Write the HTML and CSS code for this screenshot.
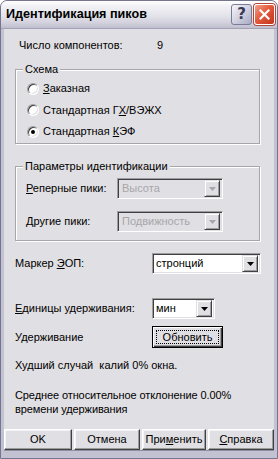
FILE: index.html
```html
<!DOCTYPE html>
<html lang="ru">
<head>
<meta charset="utf-8">
<title>Идентификация пиков</title>
<link rel="stylesheet" href="styles.css">
</head>
<body>
<div class="window">
  <div class="titlebar">
    <div class="title">Идентификация пиков</div>
    <div class="tbtn help">?</div>
    <div class="tbtn close">
      <svg width="11" height="11" viewBox="0 0 11 11"><path d="M1.5 1.5 L9.5 9.5 M9.5 1.5 L1.5 9.5" stroke="#fff" stroke-width="2.2" stroke-linecap="square"/></svg>
    </div>
  </div>
  <div class="client">
    <div class="count"><span class="count-label">Число компонентов:</span><span>9</span></div>

    <div class="group group-scheme">
      <div class="legend">Схема</div>
      <div class="radios">
        <div class="radio-row"><span class="radio"></span><span><u>З</u>аказная</span></div>
        <div class="radio-row"><span class="radio"></span><span>Стандартная Г<u>Х</u>/ВЭЖХ</span></div>
        <div class="radio-row"><span class="radio checked"></span><span>Стандартная <u>К</u>ЭФ</span></div>
      </div>
    </div>

    <div class="group group-params">
      <div class="legend">Параметры идентификации</div>
      <div class="param-rows">
        <div class="param-row">
          <span class="param-label"><u>Р</u>еперные пики:</span>
          <div class="combo disabled combo-param"><span class="val">Высота</span><span class="drop"><svg width="7" height="4" viewBox="0 0 7 4"><path d="M0 0H7L3.5 4Z"/></svg></span></div>
        </div>
        <div class="param-row">
          <span class="param-label"><u>Д</u>ругие пики:</span>
          <div class="combo disabled combo-param"><span class="val">Подвижность</span><span class="drop"><svg width="7" height="4" viewBox="0 0 7 4"><path d="M0 0H7L3.5 4Z"/></svg></span></div>
        </div>
      </div>
    </div>

    <div class="field-row row-marker">
      <span class="field-label">Маркер <u>Э</u>ОП:</span>
      <div class="combo combo-marker"><span class="val">стронций</span><span class="drop"><svg width="7" height="4" viewBox="0 0 7 4"><path d="M0 0H7L3.5 4Z"/></svg></span></div>
    </div>

    <div class="field-row row-units">
      <span class="field-label"><u>Е</u>диницы удерживания:</span>
      <div class="combo combo-units"><span class="val">мин</span><span class="drop"><svg width="7" height="4" viewBox="0 0 7 4"><path d="M0 0H7L3.5 4Z"/></svg></span></div>
    </div>

    <div class="field-row row-ret">
      <span class="field-label">Удерживание</span>
      <div class="btn default"><span class="focus">Обновить</span></div>
    </div>

    <div class="worst">Худший случай  калий 0% окна.</div>
    <div class="deviation">Среднее относительное отклонение 0.00%<br>времени удерживания</div>

    <div class="buttons">
      <div class="btn b-ok">OK</div>
      <div class="btn b-cancel">Отмена</div>
      <div class="btn b-apply">При<u>м</u>енить</div>
      <div class="btn b-help"><u>С</u>правка</div>
    </div>
  </div>
</div>
</body>
</html>
```
FILE: styles.css
```css
* { box-sizing: border-box; }
html, body { margin: 0; padding: 0; }
body {
  width: 278px;
  height: 459px;
  background: #fff;
  font-family: "Liberation Sans", Arial, sans-serif;
  font-size: 11px;
  line-height: 13px;
  color: #000;
  overflow: hidden;
}
u { text-decoration: underline; text-underline-offset: 1px; }

.window {
  width: 278px;
  height: 459px;
  display: flex;
  flex-direction: column;
  background: #c3c2d3;
  border: 1px solid #76758e;
  border-radius: 7px 7px 0 0;
  overflow: hidden;
}

.titlebar {
  flex: none;
  height: 28px;
  display: flex;
  align-items: center;
  gap: 2px;
  padding: 0 2px 1px 5px;
  background: linear-gradient(#ffffff 0%, #f1f1f5 20%, #e3e3ea 55%, #d2d1dd 80%, #bfbecd 100%);
  border-bottom: 1px solid #a3a2b6;
}
.title {
  flex: 1;
  font-weight: bold;
  font-size: 12.6px;
  color: #000;
  line-height: 16px;
}
.tbtn {
  width: 21px;
  height: 21px;
  border-radius: 3px;
  display: flex;
  align-items: center;
  justify-content: center;
}
.help {
  border: 1px solid #7b7a98;
  background: linear-gradient(135deg, #f6f6fa 0%, #d6d6e4 45%, #a9a9c4 100%);
  color: #3a3a58;
  font-weight: bold;
  font-size: 15px;
  font-family: "DejaVu Sans", sans-serif;
}
.close {
  border: 1px solid #fff;
  box-shadow: 0 0 0 1px #b0473a;
  background: linear-gradient(135deg, #f2a08c 0%, #e45a3c 45%, #c1341c 100%);
}
.close svg { display: block; }

.client {
  flex: 1;
  margin: 0 3px 7px 3px;
  background: #e0dfe3;
  padding: 10px 0 0 11px;
  border-bottom: 1px solid #8f8ea3;
}

.count { display: flex; padding-left: 4px; height: 13px; }
.count-label { width: 138px; }

.group {
  width: 245px;
  border: 1px solid #a7a6aa;
  box-shadow: inset 1px 1px #fff, 1px 1px #fff;
}
.legend {
  width: fit-content;
  margin: -7px 0 0 7px;
  padding: 0 2px;
  background: #e0dfe3;
  height: 13px;
}
.group-scheme { margin-top: 17px; padding-bottom: 5px; }
.radios {
  display: flex;
  flex-direction: column;
  gap: 8.5px;
  margin-top: 6px;
  padding-left: 11px;
}
.radio-row { display: flex; align-items: center; gap: 4px; height: 13px; }
.radio {
  position: relative;
  width: 12px;
  height: 12px;
  border-radius: 50%;
  background: #fff;
  border: 1px solid;
  border-color: #9d9da1 #fff #fff #9d9da1;
  box-shadow: inset 1px 1px #404040, inset -1px -1px #e0dfe3;
  flex: none;
}
.radio.checked::after {
  content: "";
  position: absolute;
  left: 3px;
  top: 3px;
  width: 4px;
  height: 4px;
  border-radius: 50%;
  background: #000;
}

.group-params { margin-top: 22px; padding-bottom: 8px; }
.param-rows {
  display: flex;
  flex-direction: column;
  gap: 12px;
  margin-top: 5px;
  padding-left: 10px;
}
.param-row { display: flex; align-items: center; height: 21px; }
.param-label { width: 91px; }

.combo {
  height: 21px;
  display: flex;
  align-items: center;
  padding: 2px;
  background: #fff;
  border: 1px solid;
  border-color: #9d9da1 #fff #fff #9d9da1;
  box-shadow: inset 1px 1px #404040, inset -1px -1px #e0dfe3;
}
.combo .val { flex: 1; padding-left: 1px; white-space: nowrap; overflow: hidden; }
.drop {
  width: 16px;
  height: 17px;
  flex: none;
  display: flex;
  align-items: center;
  justify-content: center;
  background: #e0dfe3;
  border: 1px solid;
  border-color: #e0dfe3 #404040 #404040 #e0dfe3;
  box-shadow: inset 1px 1px #fff, inset -1px -1px #9d9da1;
}
.drop svg { display: block; fill: #000; }
.combo.disabled { background: #e0dfe3; }
.combo.disabled .val { color: #a7a6aa; padding-left: 2px; }
.combo.disabled .drop svg { fill: #a7a6aa; }
.combo-param { width: 106px; }

.field-row { display: flex; align-items: center; }
.field-label { width: 137px; }
.row-marker { margin-top: 12px; height: 21px; }
.combo-marker { width: 109px; }
.row-units { margin-top: 24px; height: 21px; }
.combo-units { width: 63px; }
.row-ret { margin-top: 7px; height: 22px; }

.btn {
  display: flex;
  align-items: center;
  justify-content: center;
  height: 22px;
  background: #e0dfe3;
  border: 1px solid;
  border-color: #fff #404040 #404040 #fff;
  box-shadow: inset -1px -1px #9d9da1, inset 1px 1px #f4f4f6;
  white-space: nowrap;
}
.btn.default {
  width: 71px;
  border: 1px solid #000;
  box-shadow: inset 1px 1px #fff, inset -1px -1px #404040, inset -2px -2px #9d9da1;
  padding: 3px;
}
.focus {
  flex: 1;
  align-self: stretch;
  display: flex;
  align-items: center;
  justify-content: center;
  border: 1px dotted #000;
  line-height: 11px;
}

.worst { margin-top: 11px; white-space: pre; height: 13px; }
.deviation { margin-top: 16px; line-height: 14px; letter-spacing: -0.1px; }

.buttons {
  display: flex;
  gap: 2px;
  margin: 13px 0 0 -11px;
}
.buttons .btn { height: 21px; }
.b-ok { width: 68px; }
.b-cancel { width: 66px; }
.b-apply { width: 64px; }
.b-help { width: 66px; }
```
